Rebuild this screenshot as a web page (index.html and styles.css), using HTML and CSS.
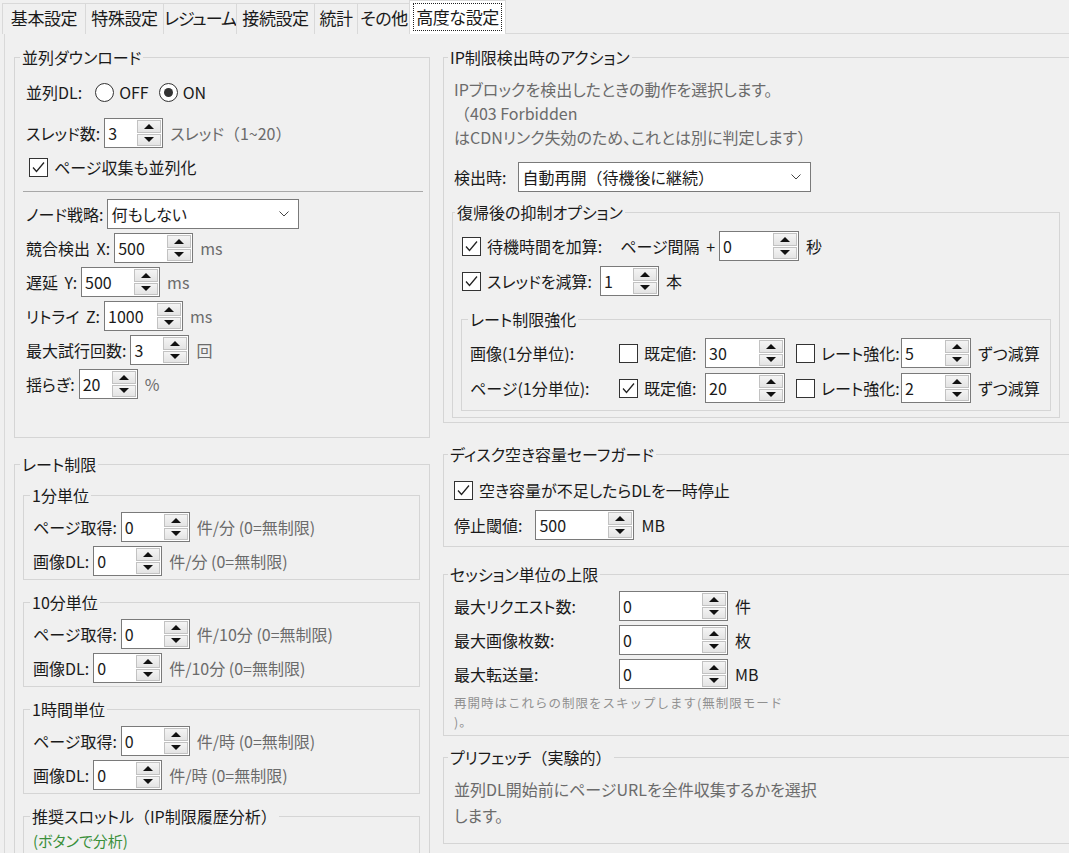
FILE: index.html
```html
<!DOCTYPE html>
<html lang="ja">
<head>
  <meta charset="UTF-8">
  <title>高度な設定</title>
  <link rel="stylesheet" href="styles.css">
</head>
<body>
  <div class="tabs">
    <div class="tab">基本設定</div>
    <div class="tab">特殊設定</div>
    <div class="tab">レジューム</div>
    <div class="tab">接続設定</div>
    <div class="tab">統計</div>
    <div class="tab">その他</div>
    <div class="tab active"><span>高度な設定</span></div>
  </div>

  <div class="panel">
    <!-- left column -->
    <div class="col col-left">
      <fieldset class="group g-parallel">
        <legend>並列ダウンロード</legend>
        <div class="rows">
          <div class="row radios">
            <span class="lbl">並列DL:</span>
            <span class="radio"></span><span class="opt">OFF</span>
            <span class="radio on"></span><span class="opt">ON</span>
          </div>
          <div class="row">
            <span class="lbl">スレッド数:</span>
            <span class="spin w59"><span class="val">3</span><span class="arrows"><b class="up"></b><b class="down"></b></span></span>
            <span class="unit">スレッド<span class="fw">（</span>1~20<span class="fw">）</span></span>
          </div>
          <div class="row checkrow">
            <span class="check"><svg viewBox="0 0 17 17"><polyline points="3,8.5 6.5,12.5 14,3.5"/></svg></span>
            <span class="ctext">ページ収集も並列化</span>
          </div>
          <hr class="sep">
          <div class="row">
            <span class="lbl">ノード戦略:</span>
            <span class="combo w192"><span class="val">何もしない</span><svg class="chev" viewBox="0 0 10 6"><polyline points="0.5,0.5 5,5 9.5,0.5"/></svg></span>
          </div>
          <div class="row">
            <span class="lbl">競合検出 X:</span>
            <span class="spin w79"><span class="val">500</span><span class="arrows"><b class="up"></b><b class="down"></b></span></span>
            <span class="unit">ms</span>
          </div>
          <div class="row">
            <span class="lbl">遅延 Y:</span>
            <span class="spin w79"><span class="val">500</span><span class="arrows"><b class="up"></b><b class="down"></b></span></span>
            <span class="unit">ms</span>
          </div>
          <div class="row">
            <span class="lbl">リトライ Z:</span>
            <span class="spin w79"><span class="val">1000</span><span class="arrows"><b class="up"></b><b class="down"></b></span></span>
            <span class="unit">ms</span>
          </div>
          <div class="row">
            <span class="lbl">最大試行回数:</span>
            <span class="spin w59"><span class="val">3</span><span class="arrows"><b class="up"></b><b class="down"></b></span></span>
            <span class="unit">回</span>
          </div>
          <div class="row">
            <span class="lbl">揺らぎ:</span>
            <span class="spin w59"><span class="val">20</span><span class="arrows"><b class="up"></b><b class="down"></b></span></span>
            <span class="unit">%</span>
          </div>
        </div>
      </fieldset>

      <fieldset class="group g-rate">
        <legend>レート制限</legend>

        <fieldset class="group rate-unit">
          <legend>1分単位</legend>
          <div class="rows">
            <div class="row">
              <span class="lbl">ページ取得:</span>
              <span class="spin w69"><span class="val">0</span><span class="arrows"><b class="up"></b><b class="down"></b></span></span>
              <span class="unit">件/分 (0=無制限)</span>
            </div>
            <div class="row">
              <span class="lbl">画像DL:</span>
              <span class="spin w69"><span class="val">0</span><span class="arrows"><b class="up"></b><b class="down"></b></span></span>
              <span class="unit">件/分 (0=無制限)</span>
            </div>
          </div>
        </fieldset>

        <fieldset class="group rate-unit">
          <legend>10分単位</legend>
          <div class="rows">
            <div class="row">
              <span class="lbl">ページ取得:</span>
              <span class="spin w69"><span class="val">0</span><span class="arrows"><b class="up"></b><b class="down"></b></span></span>
              <span class="unit">件/10分 (0=無制限)</span>
            </div>
            <div class="row">
              <span class="lbl">画像DL:</span>
              <span class="spin w69"><span class="val">0</span><span class="arrows"><b class="up"></b><b class="down"></b></span></span>
              <span class="unit">件/10分 (0=無制限)</span>
            </div>
          </div>
        </fieldset>

        <fieldset class="group rate-unit">
          <legend>1時間単位</legend>
          <div class="rows">
            <div class="row">
              <span class="lbl">ページ取得:</span>
              <span class="spin w69"><span class="val">0</span><span class="arrows"><b class="up"></b><b class="down"></b></span></span>
              <span class="unit">件/時 (0=無制限)</span>
            </div>
            <div class="row">
              <span class="lbl">画像DL:</span>
              <span class="spin w69"><span class="val">0</span><span class="arrows"><b class="up"></b><b class="down"></b></span></span>
              <span class="unit">件/時 (0=無制限)</span>
            </div>
          </div>
        </fieldset>

        <fieldset class="group rate-unit g-throttle">
          <legend>推奨スロットル<span class="fw">（</span>IP制限履歴分析<span class="fw">）</span></legend>
          <p class="hint">(ボタンで分析)</p>
        </fieldset>
      </fieldset>
    </div>

    <!-- right column -->
    <div class="col col-right">
      <fieldset class="group g-ip">
        <legend>IP制限検出時のアクション</legend>
        <p class="desc">IPブロックを検出したときの動作を選択します。<br><span class="fw">（</span>403 Forbidden<br>はCDNリンク失効のため、これとは別に判定します<span class="fw">）</span></p>
        <div class="row when">
          <span class="lbl">検出時:</span>
          <span class="combo w293"><span class="val">自動再開<span class="fw">（</span>待機後に継続<span class="fw">）</span></span><svg class="chev" viewBox="0 0 10 6"><polyline points="0.5,0.5 5,5 9.5,0.5"/></svg></span>
        </div>

        <fieldset class="group g-after">
          <legend>復帰後の抑制オプション</legend>
          <div class="rows gap5">
            <div class="row">
              <span class="check"><svg viewBox="0 0 17 17"><polyline points="3,8.5 6.5,12.5 14,3.5"/></svg></span>
              <span class="ctext">待機時間を加算:</span>
              <span class="lbl interval">ページ間隔 +</span>
              <span class="spin w80"><span class="val">0</span><span class="arrows"><b class="up"></b><b class="down"></b></span></span>
              <span class="unit dark">秒</span>
            </div>
            <div class="row">
              <span class="check"><svg viewBox="0 0 17 17"><polyline points="3,8.5 6.5,12.5 14,3.5"/></svg></span>
              <span class="ctext lbl reduce">スレッドを減算:</span>
              <span class="spin w59"><span class="val">1</span><span class="arrows"><b class="up"></b><b class="down"></b></span></span>
              <span class="unit dark">本</span>
            </div>
          </div>

          <fieldset class="group g-boost">
            <legend>レート制限強化</legend>
            <div class="rows gap5">
              <div class="row">
                <span class="boost-lbl">画像(1分単位):</span>
                <span class="boost-def"><span class="check"></span><span class="ctext">既定値:</span></span>
                <span class="spin w80"><span class="val">30</span><span class="arrows"><b class="up"></b><b class="down"></b></span></span>
                <span class="boost-up"><span class="check"></span><span class="ctext">レート強化:</span></span>
                <span class="spin w70"><span class="val">5</span><span class="arrows"><b class="up"></b><b class="down"></b></span></span>
                <span class="unit dark">ずつ減算</span>
              </div>
              <div class="row">
                <span class="boost-lbl">ページ(1分単位):</span>
                <span class="boost-def"><span class="check"><svg viewBox="0 0 17 17"><polyline points="3,8.5 6.5,12.5 14,3.5"/></svg></span><span class="ctext">既定値:</span></span>
                <span class="spin w80"><span class="val">20</span><span class="arrows"><b class="up"></b><b class="down"></b></span></span>
                <span class="boost-up"><span class="check"></span><span class="ctext">レート強化:</span></span>
                <span class="spin w70"><span class="val">2</span><span class="arrows"><b class="up"></b><b class="down"></b></span></span>
                <span class="unit dark">ずつ減算</span>
              </div>
            </div>
          </fieldset>
        </fieldset>
      </fieldset>

      <fieldset class="group g-disk">
        <legend>ディスク空き容量セーフガード</legend>
        <div class="rows gap5">
          <div class="row">
            <span class="check"><svg viewBox="0 0 17 17"><polyline points="3,8.5 6.5,12.5 14,3.5"/></svg></span>
            <span class="ctext">空き容量が不足したらDLを一時停止</span>
          </div>
          <div class="row">
            <span class="lbl">停止閾値:</span>
            <span class="spin w99"><span class="val">500</span><span class="arrows"><b class="up"></b><b class="down"></b></span></span>
            <span class="unit dark">MB</span>
          </div>
        </div>
      </fieldset>

      <fieldset class="group g-session">
        <legend>セッション単位の上限</legend>
        <div class="rows">
          <div class="row">
            <span class="session-lbl">最大リクエスト数:</span>
            <span class="spin w109"><span class="val">0</span><span class="arrows"><b class="up"></b><b class="down"></b></span></span>
            <span class="unit dark">件</span>
          </div>
          <div class="row">
            <span class="session-lbl">最大画像枚数:</span>
            <span class="spin w109"><span class="val">0</span><span class="arrows"><b class="up"></b><b class="down"></b></span></span>
            <span class="unit dark">枚</span>
          </div>
          <div class="row">
            <span class="session-lbl">最大転送量:</span>
            <span class="spin w109"><span class="val">0</span><span class="arrows"><b class="up"></b><b class="down"></b></span></span>
            <span class="unit dark">MB</span>
          </div>
        </div>
        <p class="note">再開時はこれらの制限をスキップします(無制限モード<br>)。</p>
      </fieldset>

      <fieldset class="group g-prefetch">
        <legend>プリフェッチ<span class="fw">（</span>実験的<span class="fw">）</span></legend>
        <p class="desc tall">並列DL開始前にページURLを全件収集するかを選択<br>します。</p>
      </fieldset>
    </div>
  </div>
</body>
</html>
```

FILE: styles.css
```css
* {
  box-sizing: border-box;
}

html, body {
  margin: 0;
}

body {
  width: 1069px;
  height: 853px;
  overflow: hidden;
  background: #f0f0f0;
  color: #1a1a1a;
  font-family: "Noto Sans CJK JP", "Noto Sans", sans-serif;
  font-size: 16px;
  font-feature-settings: "palt";
}

/* full-width brackets keep their em width */
.fw {
  font-feature-settings: normal;
}

/* tab strip */
.tabs {
  display: flex;
  align-items: flex-end;
  height: 34px;
  margin-bottom: -1px;
  padding-left: 2px;
}

.tab {
  height: 31px;
  margin-right: -1px;
  border: 1px solid #d9d9d9;
  border-bottom: none;
  background: #f0f0f0;
  font-size: 17px;
  letter-spacing: -0.4px;
  line-height: 28px;
  text-align: center;
  white-space: nowrap;
}

.tab:nth-child(1) { width: 84px; }
.tab:nth-child(2) { width: 79px; }
.tab:nth-child(3) { width: 74px; letter-spacing: -1px; }
.tab:nth-child(4) { width: 79px; }
.tab:nth-child(5) { width: 44px; }
.tab:nth-child(6) { width: 54px; }

.tab.active {
  position: relative;
  z-index: 1;
  width: 97px;
  height: 34px;
  margin: 0 0 0 -1px;
  padding: 2px 3px 0;
  background: #fff;
}

.tab.active span {
  display: block;
  line-height: 26px;
  border: 1px dotted #222;
}

.panel {
  display: flex;
  align-items: flex-start;
  gap: 13px;
  height: 820px;
  margin-left: 4px;
  padding: 13px 0 0 9px;
  border-top: 1px solid #d9d9d9;
  border-left: 1px solid #d9d9d9;
  overflow: hidden;
}

.col {
  flex: none;
}

.col-left {
  width: 416px;
}

.col-right {
  width: 627px;
}

/* group boxes */
.group {
  min-width: 0;
  margin: 0;
  border: 1px solid #d5d5d5;
}

.group > legend {
  padding: 0 2px;
  margin-left: -6px;
  line-height: 20px;
}

.rows {
  display: flex;
  flex-direction: column;
  gap: 4px;
}

.rows.gap5 {
  gap: 5px;
}

.row {
  display: flex;
  align-items: center;
  height: 30px;
  white-space: nowrap;
}

.lbl {
  margin-right: 4px;
  word-spacing: 3px;
}

.unit {
  margin-left: 7px;
  color: #6b6b6b;
}

.unit.dark {
  color: #1a1a1a;
}

/* left column */
.g-parallel {
  padding: 10px 9px 38px 11px;
}

.radios {
  margin-bottom: 7px;
}

.radios .lbl {
  margin-right: 13px;
}

.opt {
  margin: 0 10px 0 5px;
}

.checkrow {
  padding-left: 3px;
}

.sep {
  height: 0;
  margin: 5px -3px 3px;
  border: 0;
  border-top: 1px solid #a8a8a8;
}

.g-rate {
  margin-top: 16px;
  padding: 11px 9px 0 8px;
}

.g-rate > legend {
  margin-left: -3px;
}

.rate-unit {
  padding: 7px 9px 3px 9px;
  margin-bottom: 12px;
}

.rate-unit > legend {
  margin-left: -3px;
}

.g-throttle {
  padding-bottom: 60px;
}

.hint {
  margin: 0;
  font-size: 15px;
  line-height: 16px;
  color: #3a8f3a;
}

/* right column */
.g-ip {
  padding: 10px 9px 4px 10px;
}

.desc {
  margin: 0;
  line-height: 24px;
  color: #6b6b6b;
}

.when {
  margin-top: 13px;
}

.when .lbl {
  margin-right: 12px;
}

.g-after {
  margin: 10px 0 0 -2px;
  padding: 9px 8px 6px 9px;
}

.g-after > legend {
  margin-left: -7px;
}

.interval {
  margin-left: 18px;
}

.reduce {
  margin-right: 8px;
}

.g-boost {
  margin: 13px 0 0 -1px;
  padding: 9px 8px 7px 8px;
}

.g-boost > legend {
  margin-left: -2px;
}

.boost-lbl {
  width: 149px;
}

.boost-def,
.boost-up {
  display: flex;
  align-items: center;
}

.boost-def {
  width: 86px;
}

.boost-up {
  width: 105px;
  margin-left: 11px;
}

.g-disk {
  margin-top: 21px;
  padding: 11px 10px 6px 10px;
}

.g-disk .lbl {
  margin-right: 13px;
}

.g-session {
  margin-top: 17px;
  padding: 7px 10px 4px 10px;
}

.session-lbl {
  width: 165px;
}

.note {
  margin: 5px 0 0;
  font-size: 12.5px;
  font-feature-settings: normal;
  letter-spacing: 1px;
  line-height: 18.5px;
  color: #909090;
}

.g-prefetch {
  margin-top: 11px;
  padding: 9px 10px 15px 10px;
}

.desc.tall {
  line-height: 26px;
}

/* widgets */
.spin {
  display: inline-flex;
  flex: none;
  height: 30px;
  border: 1px solid #7a7a7a;
  background: #fff;
}

.spin .val {
  flex: 1;
  padding-left: 3px;
  line-height: 28px;
}

.spin .arrows {
  display: flex;
  flex-direction: column;
  gap: 1px;
  width: 25px;
  padding: 1px 1px 1px 0;
}

.arrows b {
  display: flex;
  flex: 1;
  align-items: center;
  justify-content: center;
  border: 1px solid #c2c2c2;
  background: linear-gradient(#f4f4f4, #e4e4e4);
}

.arrows b::after {
  content: "";
  border-left: 5px solid transparent;
  border-right: 5px solid transparent;
}

.arrows .up::after {
  border-bottom: 5px solid #111;
}

.arrows .down::after {
  border-top: 5px solid #111;
}

.w59 { width: 59px; }
.w69 { width: 69px; }
.w70 { width: 70px; }
.w79 { width: 79px; }
.w80 { width: 80px; }
.w99 { width: 99px; }
.w109 { width: 109px; }
.w192 { width: 192px; }
.w293 { width: 293px; }

.combo {
  display: inline-flex;
  align-items: center;
  flex: none;
  height: 30px;
  padding: 0 9px 0 3px;
  border: 1px solid #7a7a7a;
  background: #fff;
}

.combo .val {
  flex: 1;
}

.chev {
  width: 10px;
  height: 6px;
  fill: none;
  stroke: #444;
  stroke-width: 1;
}

.check {
  display: inline-flex;
  flex: none;
  width: 19px;
  height: 19px;
  border: 1px solid #333;
  background: #fff;
}

.check svg {
  width: 17px;
  height: 17px;
  fill: none;
  stroke: #222;
  stroke-width: 1.3;
}

.ctext {
  margin-left: 6px;
}

.radio {
  display: inline-flex;
  align-items: center;
  justify-content: center;
  flex: none;
  width: 19px;
  height: 19px;
  border: 1px solid #333;
  border-radius: 50%;
  background: #fff;
}

.radio.on::after {
  content: "";
  width: 9px;
  height: 9px;
  border-radius: 50%;
  background: #333;
}
```
